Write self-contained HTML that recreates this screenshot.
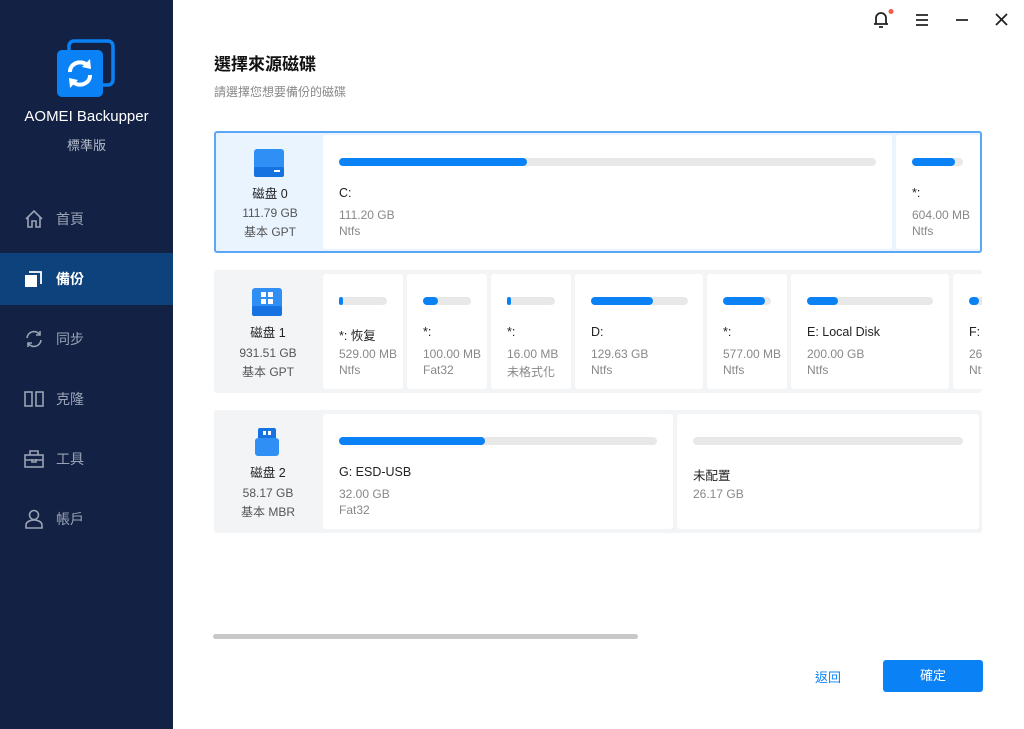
<!DOCTYPE html>
<html><head><meta charset="utf-8"><style>
*{margin:0;padding:0;box-sizing:border-box}
body{width:1024px;height:729px;overflow:hidden;background:#fff;font-family:"Liberation Sans","Noto Sans CJK TC",sans-serif;position:relative}
.a{position:absolute}
#side{left:0;top:0;width:173px;height:729px;background:#132244}
.nav{left:0;width:173px;height:52px;color:#9aa3b5;font-size:14px}
.nav span{position:absolute;left:56px;top:16px}
.nav svg{position:absolute;left:24px;top:16px}
.row{left:214px;width:768px;background:#f3f4f6;border-radius:3px;overflow:hidden}
.card{background:#fff;border-radius:3px;top:4px;bottom:4px;overflow:hidden}
.bar{height:8px;border-radius:4px;background:#e8e8e8;top:23px;left:16px}
.bar i{position:absolute;left:0;top:0;height:8px;border-radius:4px;background:#0a82f5}
.l1{left:16px;top:51px;font-size:12.5px;color:#222;white-space:nowrap}
.l2{left:16px;top:73px;font-size:12px;color:#888;white-space:nowrap}
.l3{left:16px;top:89px;font-size:12px;color:#888;white-space:nowrap}
.dk{left:0;width:108px;text-align:center;font-size:12px;color:#555}
</style></head><body>
<div id="side" class="a">
 <svg class="a" style="left:56px;top:39px" width="60" height="60"><rect x="13" y="2" width="44" height="44" rx="5" fill="none" stroke="#0a82f5" stroke-width="3.5"/><rect x="1" y="11" width="46" height="47" rx="5" fill="#0a82f5"/>
 <path d="M14 33a10 9 0 0 1 18-6" stroke="#fff" stroke-width="4" fill="none"/><path d="M34 20l1 10-9-2z" fill="#fff"/><path d="M34 36a10 9 0 0 1-18 6" stroke="#fff" stroke-width="4" fill="none"/><path d="M14 49l-1-10 9 2z" fill="#fff"/></svg>
 <div class="a" style="left:0;width:173px;top:108px;text-align:center;color:#fff;font-size:15px">AOMEI Backupper</div>
 <div class="a" style="left:0;width:173px;top:135px;text-align:center;color:#b5bccb;font-size:13px">標準版</div>
 <div class="a nav" style="top:193px"><svg width="20" height="20" fill="none" stroke="#9aa3b5" stroke-width="1.6"><path d="M2 10L10 2l8 8M4 8v10h4v-6h4v6h4V8"/></svg><span>首頁</span></div>
 <div class="a nav" style="top:253px;background:#0d427d;color:#fff;font-weight:bold"><svg width="20" height="20"><rect x="1" y="6" width="12" height="12" fill="#fff"/><path d="M5 3h12v12" stroke="#fff" stroke-width="1.8" fill="none"/></svg><span>備份</span></div>
 <div class="a nav" style="top:313px"><svg width="20" height="20" fill="none" stroke="#9aa3b5" stroke-width="1.6"><path d="M3 9a7 7 0 0 1 13-3M17 11a7 7 0 0 1-13 3"/><path d="M16 2v4h-4M4 18v-4h4"/></svg><span>同步</span></div>
 <div class="a nav" style="top:373px"><svg width="20" height="20" fill="none" stroke="#9aa3b5" stroke-width="1.6"><rect x="1" y="3" width="7" height="14"/><rect x="12" y="3" width="7" height="14"/></svg><span>克隆</span></div>
 <div class="a nav" style="top:433px"><svg width="20" height="20" fill="none" stroke="#9aa3b5" stroke-width="1.6"><rect x="1" y="6" width="18" height="12"/><path d="M6 6V2h8v4M1 11h18M8 10v3h4v-3"/></svg><span>工具</span></div>
 <div class="a nav" style="top:493px"><svg width="20" height="20" fill="none" stroke="#9aa3b5" stroke-width="1.6"><circle cx="10" cy="6" r="4.5"/><path d="M2 19v-3c0-3 4-5 8-5s8 2 8 5v3z"/></svg><span>帳戶</span></div>
</div>
<svg class="a" style="left:872px;top:9px" width="140" height="22" fill="none" stroke="#222" stroke-width="1.8"><path d="M4 15V9a5 5 0 0 1 10 0v6zM2 15h14M7 18h4"/><circle cx="19" cy="2.5" r="2.5" fill="#f25b4a" stroke="none"/><path d="M44 6h12M44 11h12M44 16h12M84 11h12M124 5l11 11M135 5l-11 11"/></svg>
<div class="a" style="left:214px;top:50px;font-size:17px;font-weight:bold;color:#111">選擇來源磁碟</div>
<div class="a" style="left:214px;top:83px;font-size:12px;color:#888">請選擇您想要備份的磁碟</div>

<div class="a row" style="top:131px;height:122px;background:#eaf4ff;border:2px solid #5aa8f5">
 <svg class="a" style="left:36px;top:14px" width="34" height="36"><rect x="2" y="2" width="30" height="24" rx="3" fill="#2f8ff5"/><rect x="2" y="20" width="30" height="10" rx="2" fill="#1572e0"/><rect x="22" y="23" width="6" height="2" fill="#fff"/></svg>
 <div class="a dk" style="top:50px;color:#222;font-size:12.5px">磁盘 0</div>
 <div class="a dk" style="top:73px">111.79 GB</div><div class="a dk" style="top:90px">基本 GPT</div>
 <div class="a card" style="left:107px;width:569px;top:2px;bottom:2px"><div class="a bar" style="width:537px"><i style="width:188px"></i></div><div class="a l1">C:</div><div class="a l2">111.20 GB</div><div class="a l3">Ntfs</div></div>
 <div class="a card" style="left:680px;width:90px;top:2px;bottom:2px"><div class="a bar" style="width:51px"><i style="width:43px"></i></div><div class="a l1">*:</div><div class="a l2">604.00 MB</div><div class="a l3">Ntfs</div></div>
</div>

<div class="a row" style="top:270px;height:123px">
 <svg class="a" style="left:36px;top:16px" width="34" height="36"><rect x="2" y="2" width="30" height="24" rx="3" fill="#2f8ff5"/><rect x="2" y="20" width="30" height="10" rx="2" fill="#1572e0"/><path d="M11 6h5v5h-5zM18 6h5v5h-5zM11 13h5v5h-5zM18 13h5v5h-5z" fill="#fff"/></svg>
 <div class="a dk" style="top:52px;color:#222;font-size:12.5px">磁盘 1</div>
 <div class="a dk" style="top:76px">931.51 GB</div><div class="a dk" style="top:93px">基本 GPT</div>
 <div class="a card" style="left:109px;width:80px"><div class="a bar" style="width:48px"><i style="width:4px"></i></div><div class="a l1">*: 恢复</div><div class="a l2">529.00 MB</div><div class="a l3">Ntfs</div></div>
 <div class="a card" style="left:193px;width:80px"><div class="a bar" style="width:48px"><i style="width:15px"></i></div><div class="a l1">*:</div><div class="a l2">100.00 MB</div><div class="a l3">Fat32</div></div>
 <div class="a card" style="left:277px;width:80px"><div class="a bar" style="width:48px"><i style="width:4px"></i></div><div class="a l1">*:</div><div class="a l2">16.00 MB</div><div class="a l3">未格式化</div></div>
 <div class="a card" style="left:361px;width:128px"><div class="a bar" style="width:97px"><i style="width:62px"></i></div><div class="a l1">D:</div><div class="a l2">129.63 GB</div><div class="a l3">Ntfs</div></div>
 <div class="a card" style="left:493px;width:80px"><div class="a bar" style="width:48px"><i style="width:42px"></i></div><div class="a l1">*:</div><div class="a l2">577.00 MB</div><div class="a l3">Ntfs</div></div>
 <div class="a card" style="left:577px;width:158px"><div class="a bar" style="width:126px"><i style="width:31px"></i></div><div class="a l1">E: Local Disk</div><div class="a l2">200.00 GB</div><div class="a l3">Ntfs</div></div>
 <div class="a card" style="left:739px;width:80px"><div class="a bar" style="width:48px"><i style="width:10px"></i></div><div class="a l1">F: Data</div><div class="a l2">26.00 GB</div><div class="a l3">Ntfs</div></div>
</div>

<div class="a row" style="top:410px;height:123px">
 <svg class="a" style="left:38px;top:16px" width="30" height="36"><rect x="6" y="2" width="18" height="12" rx="2" fill="#1572e0"/><rect x="11" y="5" width="3" height="4" fill="#fff"/><rect x="16" y="5" width="3" height="4" fill="#fff"/><rect x="3" y="12" width="24" height="18" rx="3" fill="#2f8ff5"/></svg>
 <div class="a dk" style="top:52px;color:#222;font-size:12.5px">磁盘 2</div>
 <div class="a dk" style="top:76px">58.17 GB</div><div class="a dk" style="top:93px">基本 MBR</div>
 <div class="a card" style="left:109px;width:350px"><div class="a bar" style="width:318px"><i style="width:146px"></i></div><div class="a l1">G: ESD-USB</div><div class="a l2">32.00 GB</div><div class="a l3">Fat32</div></div>
 <div class="a card" style="left:463px;width:302px"><div class="a bar" style="width:270px"></div><div class="a l1">未配置</div><div class="a l2">26.17 GB</div></div>
</div>

<div class="a" style="left:213px;top:634px;width:425px;height:5px;border-radius:3px;background:#c8c8c8"></div>
<div class="a" style="left:815px;top:667px;font-size:13px;color:#0a82f5">返回</div>
<div class="a" style="left:883px;top:660px;width:100px;height:32px;background:#0a82f5;border-radius:3px;color:#fff;font-size:13px;text-align:center;line-height:32px">確定</div>
</body></html>
